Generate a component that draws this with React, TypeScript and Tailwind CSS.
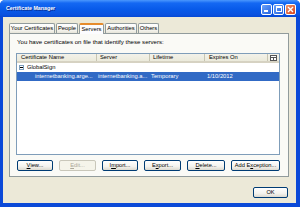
import React from "react";

function Btn({ w, children, disabled }: { w: string; children: React.ReactNode; disabled?: boolean }) {
  return (
    <div
      className={`${w} h-[11px] flex items-center justify-center rounded-[2px] border text-[5.7px] leading-none ${
        disabled
          ? "border-[#c9c7ba] text-[#aca899] bg-[#f5f4ea]"
          : "border-[#003c74] text-black bg-[linear-gradient(to_bottom,#ffffff_0%,#f4f3ee_60%,#dcd9cf_100%)]"
      }`}
    >
      {children}
    </div>
  );
}

function Tab({ w, children, active }: { w: string; children: React.ReactNode; active?: boolean }) {
  if (active) {
    return (
      <div
        className={`${w} h-[11px] -mb-[1px] relative z-10 flex items-center justify-center border border-b-0 border-[#919b9c] border-t-[#e68b2c] border-t-2 rounded-t-[2px] bg-[#fcfcfe] text-[5.8px] leading-none`}
      >
        {children}
      </div>
    );
  }
  return (
    <div
      className={`${w} h-[10px] flex items-center justify-center border border-b-0 border-[#919b9c] rounded-t-[2px] bg-[linear-gradient(to_bottom,#ffffff_0%,#f3f2ec_70%,#e6e4d8_100%)] text-[5.8px] leading-none`}
    >
      {children}
    </div>
  );
}

export default function App() {
  return (
    <div className="w-[300px] h-[207px] bg-white font-['Liberation_Sans',Arial,sans-serif] text-black">
      <div className="w-[300px] h-[207px] flex flex-col bg-[#0b49d8] rounded-t-[5px] overflow-hidden">
        {/* Title bar */}
        <div className="h-[17px] shrink-0 flex items-center justify-between pl-[6px] pr-[4px] pt-[1px] bg-[linear-gradient(to_bottom,#4a97fd_0%,#1468f3_18%,#085ae9_55%,#0a52e0_85%,#0648d4_100%)]">
          <span className="text-white font-bold text-[5.3px] leading-none [text-shadow:1px_1px_0_#0a2a8a]">
            Certificate Manager
          </span>
          <div className="flex gap-[1px] items-center">
            <div className="w-[11px] h-[11px] rounded-[2px] border border-white bg-[linear-gradient(135deg,#6aa2fa,#2663e0)] flex items-end justify-start pl-[2px] pb-[2px]">
              <div className="w-[4px] h-[1.5px] bg-white" />
            </div>
            <div className="w-[11px] h-[11px] rounded-[2px] border border-white bg-[linear-gradient(135deg,#6aa2fa,#2663e0)] flex items-center justify-center">
              <div className="w-[6px] h-[6px] border border-white border-t-2" />
            </div>
            <div className="w-[11px] h-[11px] rounded-[2px] border border-white bg-[linear-gradient(135deg,#f0956c,#d6431b)] flex items-center justify-center">
              <svg width="7" height="7" viewBox="0 0 7 7">
                <path d="M1 1 L6 6 M6 1 L1 6" stroke="white" strokeWidth="1.4" />
              </svg>
            </div>
          </div>
        </div>

        {/* Body */}
        <div className="flex-1 ml-[3px] mr-[4px] mb-[4px] bg-[#ece9d8] flex flex-col pl-[6px] pr-[7px] pt-[6px]">
          {/* Tabs */}
          <div className="flex items-end gap-[1px] h-[10px] pl-0">
            <Tab w="w-[46px]">Your Certificates</Tab>
            <Tab w="w-[22px]">People</Tab>
            <Tab w="w-[25px]" active>
              Servers
            </Tab>
            <Tab w="w-[32px]">Authorities</Tab>
            <Tab w="w-[21px]">Others</Tab>
          </div>

          {/* Panel */}
          <div className="w-[280px] h-[144px] border border-[#919b9c] bg-[#fafaf6] flex flex-col pl-[6px] pr-[8px] pt-[4px]">
            <div className="h-[8px] leading-[8px] text-[6.1px] pl-[1px] whitespace-nowrap">
              You have certificates on file that identify these servers:
            </div>

            {/* List */}
            <div className="mt-[7px] h-[102px] border border-[#7f9db9] bg-white flex flex-col text-[5.8px]">
              <div className="h-[9px] flex bg-[linear-gradient(to_bottom,#f3f2ea,#ebeadb)] border-b-2 border-[#d6d2c2]">
                <div className="w-[80px] pl-[4px] flex items-center border-r border-[#c7c5b2] whitespace-nowrap">Certificate Name</div>
                <div className="w-[53px] pl-[3px] flex items-center border-r border-[#c7c5b2]">Server</div>
                <div className="w-[55px] pl-[3px] flex items-center border-r border-[#c7c5b2]">Lifetime</div>
                <div className="w-[63px] pl-[4px] flex items-center border-r border-[#c7c5b2]">Expires On</div>
                <div className="flex-1 flex items-center justify-center">
                  <svg width="7" height="6" viewBox="0 0 7 6">
                    <rect x="0.5" y="0.5" width="6" height="5" fill="white" stroke="#555" strokeWidth="1" />
                    <path d="M0.5 2.5 H6.5 M3.5 2.5 V5.5" stroke="#555" strokeWidth="1" />
                  </svg>
                </div>
              </div>
              <div className="h-[9px] flex items-center pl-[2px] gap-[3px]">
                <div className="w-[5px] h-[5px] border border-[#7b9ebd] bg-white flex items-center justify-center">
                  <div className="w-[3px] h-[1px] bg-black" />
                </div>
                <span>GlobalSign</span>
              </div>
              <div className="h-[9px] flex items-center bg-[#316ac5] text-white">
                <div className="w-[80px] pl-[18px] whitespace-nowrap overflow-hidden">internetbanking.arge...</div>
                <div className="w-[53px] pl-[1px] whitespace-nowrap overflow-hidden">internetbanking.a...</div>
                <div className="w-[57px] pl-[1px] whitespace-nowrap">Temporary</div>
                <div className="flex-1 whitespace-nowrap">1/10/2012</div>
              </div>
            </div>

            {/* Buttons */}
            <div className="mt-[5px] flex gap-[6px] pl-[1px]">
              <Btn w="w-[36px]">
                <span className="underline">V</span>iew...
              </Btn>
              <Btn w="w-[37px]" disabled>
                <span className="underline">E</span>dit...
              </Btn>
              <Btn w="w-[36px]">
                I<span className="underline">m</span>port...
              </Btn>
              <Btn w="w-[37px]">
                E<span className="underline">x</span>port...
              </Btn>
              <Btn w="w-[38px]">
                <span className="underline">D</span>elete...
              </Btn>
              <Btn w="w-[49px]">
                Add E<span className="underline">x</span>ception...
              </Btn>
            </div>
          </div>

          {/* OK */}
          <div className="mt-[10px] flex justify-end pr-[1px]">
            <Btn w="w-[35px]">OK</Btn>
          </div>
        </div>
      </div>
    </div>
  );
}
